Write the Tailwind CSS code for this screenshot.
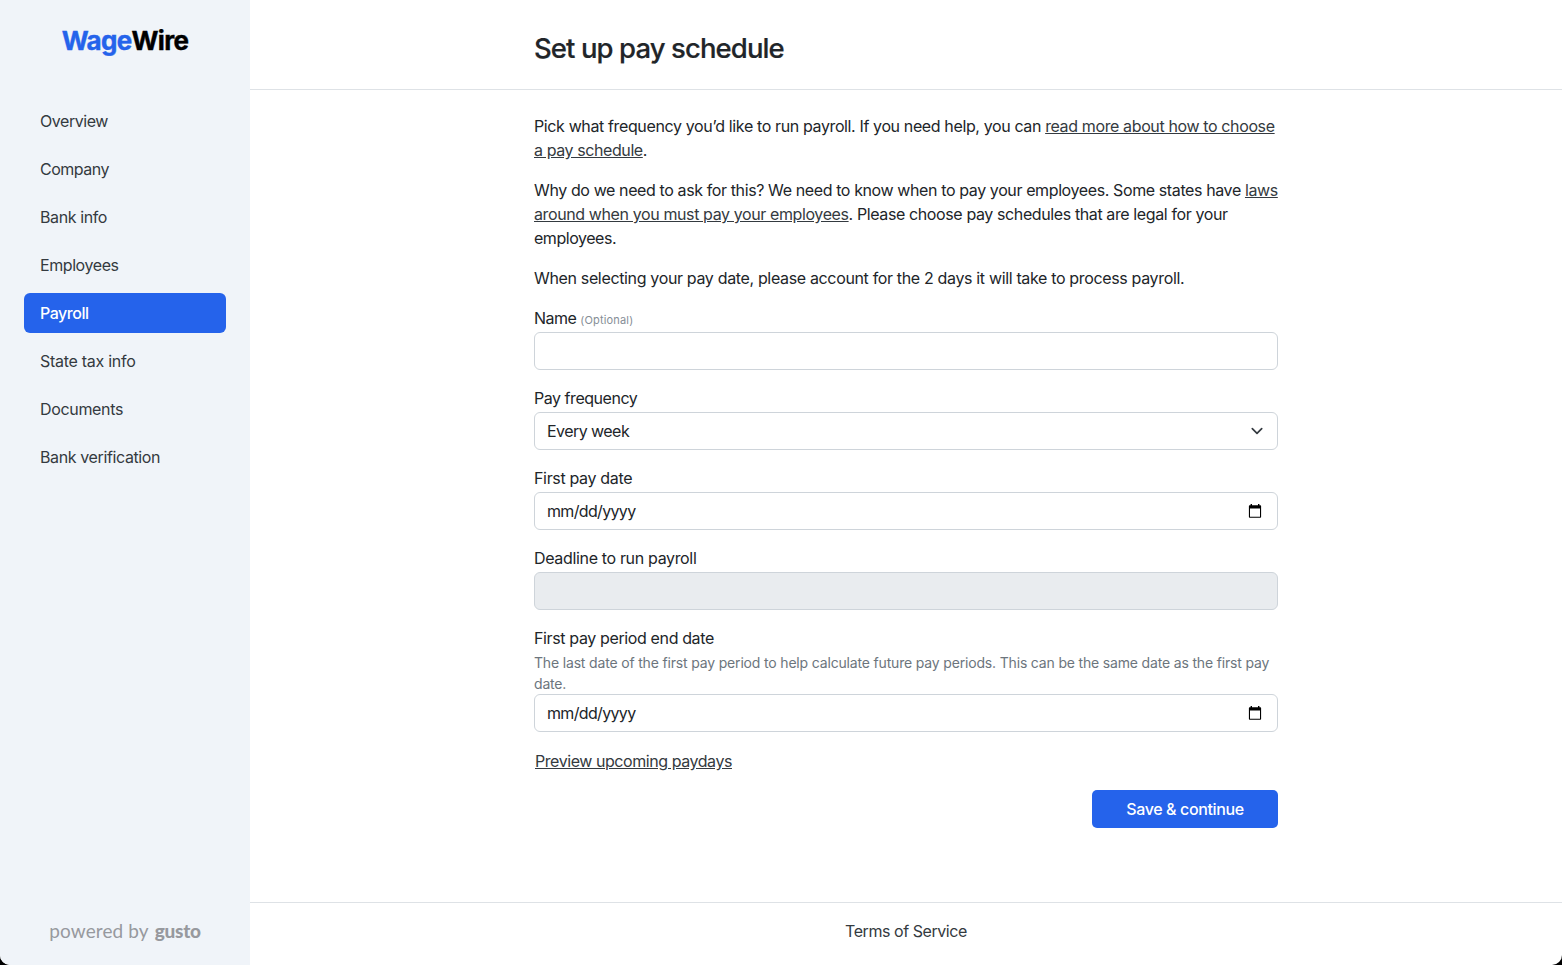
<!DOCTYPE html>
<html lang="en">
<head>
<meta charset="utf-8">
<title>WageWire</title>
<script src="https://cdn.jsdelivr.net/npm/@tailwindcss/browser@4"></script>
</head>
<body class="font-['Inter',sans-serif] text-base tracking-[-0.34px] text-[#212529]">
<div class="h-[965px] w-[1562px] overflow-hidden bg-black">
<div class="flex h-full w-full overflow-hidden rounded-b-[10px] bg-white">
  <aside class="flex w-[250px] shrink-0 flex-col bg-[#f0f4f9] px-6">
    <div class="mt-[22px] flex h-9 items-center justify-center whitespace-nowrap text-[26px] font-bold tracking-[-0.7px] [-webkit-text-stroke:0.4px]"><span class="text-[#2563eb]">Wage</span><span class="text-black">Wire</span></div>
    <nav class="mt-[43px] flex flex-col gap-2 text-[#343a40]">
      <a class="flex h-10 items-center rounded-md px-4 tracking-[-0.45px]">Overview</a>
      <a class="flex h-10 items-center rounded-md px-4 tracking-[-0.48px]">Company</a>
      <a class="flex h-10 items-center rounded-md px-4 tracking-[-0.4px]">Bank info</a>
      <a class="flex h-10 items-center rounded-md px-4 tracking-[-0.42px]">Employees</a>
      <a class="flex h-10 items-center rounded-md bg-[#2563eb] px-4 font-medium tracking-[-0.48px] text-white">Payroll</a>
      <a class="flex h-10 items-center rounded-md px-4 tracking-[-0.28px]">State tax info</a>
      <a class="flex h-10 items-center rounded-md px-4 tracking-[-0.34px]">Documents</a>
      <a class="flex h-10 items-center rounded-md px-4 tracking-[-0.38px]">Bank verification</a>
    </nav>
    <div class="mt-auto mb-5 flex items-baseline justify-center gap-1.5 font-['Lato',sans-serif] text-[19px] text-[#97999e]"><span class="tracking-[0.1px]">powered by</span><span class="font-black tracking-[-0.25px]">gusto</span></div>
  </aside>
  <main class="flex min-w-0 flex-1 flex-col">
    <header class="flex h-[90px] shrink-0 justify-center border-b border-[#dee2e6]">
      <h1 class="w-[744px] whitespace-nowrap pt-8 text-[27.5px] leading-[33px] font-medium tracking-[-0.91px] [-webkit-text-stroke:0.2px]">Set up pay schedule</h1>
    </header>
    <div class="flex w-[744px] flex-1 flex-col self-center whitespace-nowrap pt-6 leading-6">
      <p class="mb-4"><span class="tracking-[-0.375px]">Pick what frequency you’d like to run payroll. If you need help, you can <a class="text-[#343a40] underline">read more about how to choose</a></span><br><span class="tracking-[-0.41px]"><a class="text-[#343a40] underline">a pay schedule</a>.</span></p>
      <p class="mb-4"><span class="tracking-[-0.39px]">Why do we need to ask for this? We need to know when to pay your employees. Some states have <a class="text-[#343a40] underline">laws</a></span><br><span class="tracking-[-0.39px]"><a class="text-[#343a40] underline">around when you must pay your employees</a>. Please choose pay schedules that are legal for your</span><br><span class="tracking-[-0.46px]">employees.</span></p>
      <p class="mb-4 tracking-[-0.345px]">When selecting your pay date, please account for the 2 days it will take to process payroll.</p>

      <label class="mb-0.5 flex h-6 items-baseline gap-1"><span class="tracking-[-0.52px]">Name</span><span class="text-[11px] tracking-[0.17px] text-[#868e96]">(Optional)</span></label>
      <div class="mb-4 h-[38px] rounded-md border border-[#ced4da] bg-white"></div>

      <label class="mb-0.5 block h-6 tracking-[-0.46px]">Pay frequency</label>
      <div class="mb-4 flex h-[38px] items-center justify-between rounded-md border border-[#ced4da] bg-white pr-3 pl-3">
        <span class="tracking-[-0.55px]">Every week</span>
        <svg class="h-4 w-4" viewBox="0 0 16 16" fill="none" stroke="#343a40" stroke-width="1.7" stroke-linecap="round" stroke-linejoin="round"><path d="m3.3 5.6 4.7 4.7 4.7-4.7"/></svg>
      </div>

      <label class="mb-0.5 block h-6 tracking-[-0.34px]">First pay date</label>
      <div class="mb-4 flex h-[38px] items-center justify-between rounded-md border border-[#ced4da] bg-white pr-[15px] pl-3">
        <span class="tracking-[-0.66px]">mm/dd/yyyy</span>
        <svg class="h-[15px] w-[14px]" viewBox="0 0 14 15"><path fill="#000" fill-rule="evenodd" d="M2.6 0H4v1.2h6V0h1.4v1.2h.9c.5 0 .8.3.8.8v11c0 .5-.3.8-.8.8H1.7c-.5 0-.8-.3-.8-.8V2c0-.5.3-.8.8-.8h.9zM2 4.6v8.1h10V4.6z"/></svg>
      </div>

      <label class="mb-0.5 block h-6">Deadline to run payroll</label>
      <div class="mb-4 h-[38px] rounded-md border border-[#ced4da] bg-[#e9ecef]"></div>

      <label class="block h-6 tracking-[-0.37px]">First pay period end date</label>
      <p class="pt-0.5 text-sm leading-[21px] tracking-[-0.17px] text-[#6c757d]">The last date of the first pay period to help calculate future pay periods. This can be the same date as the first pay<br>date.</p>
      <div class="flex h-[38px] items-center justify-between rounded-md border border-[#ced4da] bg-white pr-[15px] pl-3">
        <span class="tracking-[-0.66px]">mm/dd/yyyy</span>
        <svg class="h-[15px] w-[14px]" viewBox="0 0 14 15"><path fill="#000" fill-rule="evenodd" d="M2.6 0H4v1.2h6V0h1.4v1.2h.9c.5 0 .8.3.8.8v11c0 .5-.3.8-.8.8H1.7c-.5 0-.8-.3-.8-.8V2c0-.5.3-.8.8-.8h.9zM2 4.6v8.1h10V4.6z"/></svg>
      </div>

      <a class="mt-[17px] ml-px block w-fit text-[#343a40] tracking-[-0.44px] underline">Preview upcoming paydays</a>
      <button class="mt-[17px] h-[38px] w-[186px] self-end rounded-[5px] bg-[#2563eb] font-medium tracking-[-0.38px] text-white">Save &amp; continue</button>
    </div>
    <footer class="flex h-[63px] shrink-0 justify-center border-t border-[#dee2e6] pt-4 leading-6 tracking-[-0.44px] text-[#343a40]">Terms of Service</footer>
  </main>
</div>
</div>
</body>
</html>
